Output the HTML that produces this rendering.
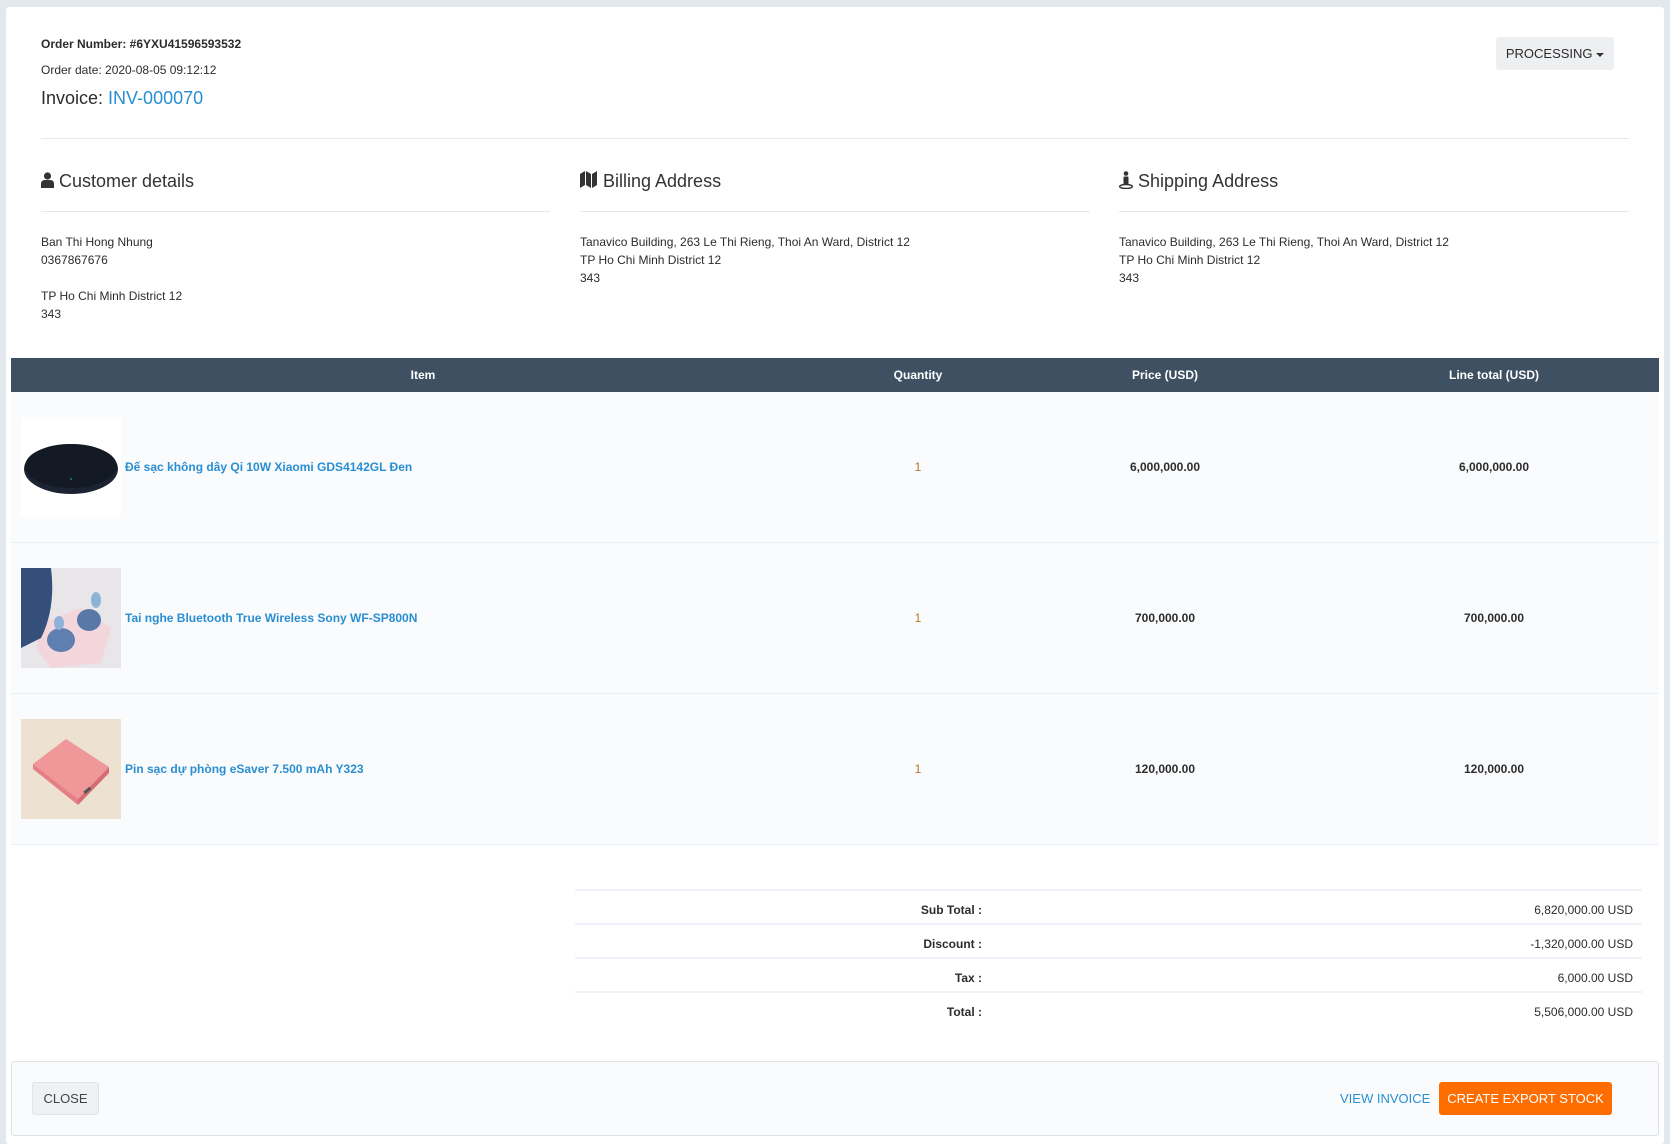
<!DOCTYPE html>
<html><head><meta charset="utf-8"><style>
*{margin:0;padding:0;box-sizing:border-box}
body{width:1670px;height:1144px;background:#e3e7ee;font-family:"Liberation Sans","Noto Sans CJK SC",sans-serif;color:#2c2c2c;position:relative;overflow:hidden;font-size:13px}
.card{position:absolute;left:6px;top:7px;width:1658px;height:1137px;background:#fff;border-radius:3px}
.a{position:absolute;white-space:nowrap}
.hr{position:absolute;height:1px;background:#e6e9ec}
.h{font-size:18px;color:#333}
.th{position:absolute;left:11px;top:358px;width:1648px;height:34px;background:#3f5062;color:#fff;font-weight:bold;font-size:12px}
.th span{position:absolute;top:10px;transform:translateX(-50%)}
.row{position:absolute;left:11px;width:1648px;height:151px;background:#f9fbfd;border-bottom:1px solid #e8eff6}
.row .img{position:absolute;left:10px;top:25px;width:100px;height:100px}
.row .nm{position:absolute;left:114px;top:68px;color:#2a8ed2;font-weight:bold;font-size:12px;white-space:nowrap}
.row .c{position:absolute;top:68px;transform:translateX(-50%);font-weight:bold;font-size:12px}
.tl{position:absolute;left:575px;width:1067px;height:2px;background:#eef3fa}
.lab{position:absolute;right:688px;font-weight:bold;font-size:12px}
.val{position:absolute;right:37px;font-size:12px}
</style></head><body>
<div class="card"></div>
<div class="a" style="left:41px;top:37px;font-weight:bold;font-size:12px">Order Number: #6YXU41596593532</div>
<div class="a" style="left:41px;top:63px;font-size:12px">Order date: 2020-08-05 09:12:12</div>
<div class="a" style="left:41px;top:88px;font-size:18px">Invoice: <span style="color:#2a8ed2">INV-000070</span></div>
<div class="a" style="left:1496px;top:37px;width:118px;height:33px;background:#eeeff1;border-radius:3px;font-size:13px;text-align:center;line-height:33px">PROCESSING <span style="display:inline-block;border-left:4px solid transparent;border-right:4px solid transparent;border-top:4px solid #333;vertical-align:middle"></span></div>
<div class="hr" style="left:41px;top:138px;width:1588px"></div>

<div class="a h" style="left:41px;top:171px"><svg width="13" height="16" viewBox="0 0 13 16" style="vertical-align:-1px"><circle cx="6.5" cy="4" r="3.6" fill="#333"/><path d="M0 16 V12 Q0 8 4 8 H9 Q13 8 13 12 V16Z" fill="#333"/></svg> Customer details</div>
<div class="a h" style="left:580px;top:171px"><svg width="18" height="17" viewBox="0 0 18 17" style="vertical-align:-1px"><path d="M0 3 L5 0 V14 L0 17Z M6 0 L11 3 V17 L6 14Z M12 3 L17 0 V14 L12 17Z" fill="#333"/></svg> Billing Address</div>
<div class="a h" style="left:1119px;top:171px"><svg width="14" height="18" viewBox="0 0 14 18" style="vertical-align:-2px"><circle cx="7" cy="2.5" r="2.3" fill="#333"/><rect x="4.5" y="5.5" width="5" height="8" rx="1" fill="#333"/><ellipse cx="7" cy="15.5" rx="6.3" ry="2" fill="none" stroke="#333" stroke-width="1.5"/></svg> Shipping Address</div>
<div class="hr" style="left:41px;top:211px;width:509px"></div>
<div class="hr" style="left:580px;top:211px;width:510px"></div>
<div class="hr" style="left:1119px;top:211px;width:510px"></div>

<div class="a" style="left:41px;top:233px;line-height:18px;font-size:12px">Ban Thi Hong Nhung<br>0367867676<br><br>TP Ho Chi Minh District 12<br>343</div>
<div class="a" style="left:580px;top:233px;line-height:18px;font-size:12px">Tanavico Building, 263 Le Thi Rieng, Thoi An Ward, District 12<br>TP Ho Chi Minh District 12<br>343</div>
<div class="a" style="left:1119px;top:233px;line-height:18px;font-size:12px">Tanavico Building, 263 Le Thi Rieng, Thoi An Ward, District 12<br>TP Ho Chi Minh District 12<br>343</div>

<div class="th"><span style="left:412px">Item</span><span style="left:907px">Quantity</span><span style="left:1154px">Price (USD)</span><span style="left:1483px">Line total (USD)</span></div>

<div class="row" style="top:392px">
<svg class="img" viewBox="0 0 100 100"><rect width="100" height="100" fill="#fff"/><ellipse cx="50" cy="52" rx="47" ry="25" fill="#1c2433"/><ellipse cx="50" cy="49" rx="46" ry="22" fill="#141a24"/><circle cx="50" cy="62" r="0.8" fill="#3c9"/></svg>
<div class="nm">Đế sạc không dây Qi 10W Xiaomi GDS4142GL Đen</div>
<div class="c" style="left:907px;color:#b5742c;font-weight:normal">1</div><div class="c" style="left:1154px">6,000,000.00</div><div class="c" style="left:1483px">6,000,000.00</div></div>

<div class="row" style="top:543px">
<svg class="img" viewBox="0 0 100 100"><rect width="100" height="100" fill="#e9e6ea"/><path d="M20 55 L60 40 L90 60 L80 95 L30 100 L15 80Z" fill="#f2d6dc"/><path d="M0 0 H30 Q35 40 20 70 L0 80Z" fill="#34507a"/><ellipse cx="40" cy="72" rx="14" ry="12" fill="#5e7fb0"/><ellipse cx="68" cy="52" rx="12" ry="11" fill="#5878a8"/><ellipse cx="75" cy="32" rx="5" ry="8" fill="#8fb3d8"/><ellipse cx="38" cy="55" rx="5" ry="7" fill="#8fb3d8"/></svg>
<div class="nm">Tai nghe Bluetooth True Wireless Sony WF-SP800N</div>
<div class="c" style="left:907px;color:#b5742c;font-weight:normal">1</div><div class="c" style="left:1154px">700,000.00</div><div class="c" style="left:1483px">700,000.00</div></div>

<div class="row" style="top:694px">
<svg class="img" viewBox="0 0 100 100"><rect width="100" height="100" fill="#ede2d2"/><path d="M12 45 L45 20 L88 48 L57 80Z" fill="#f0979a"/><path d="M12 45 L57 80 L57 86 L12 50Z" fill="#e57f85"/><path d="M57 80 L88 48 L88 54 L57 86Z" fill="#d66d74"/><rect x="62" y="70" width="8" height="3" fill="#555" transform="rotate(-40 66 71)"/></svg>
<div class="nm">Pin sạc dự phòng eSaver 7.500 mAh Y323</div>
<div class="c" style="left:907px;color:#b5742c;font-weight:normal">1</div><div class="c" style="left:1154px">120,000.00</div><div class="c" style="left:1483px">120,000.00</div></div>

<div class="tl" style="top:889px"></div>
<div class="tl" style="top:923px"></div>
<div class="tl" style="top:957px"></div>
<div class="tl" style="top:991px"></div>
<div class="lab" style="top:903px">Sub Total :</div><div class="val" style="top:903px">6,820,000.00 USD</div>
<div class="lab" style="top:937px">Discount :</div><div class="val" style="top:937px">-1,320,000.00 USD</div>
<div class="lab" style="top:971px">Tax :</div><div class="val" style="top:971px">6,000.00 USD</div>
<div class="lab" style="top:1005px">Total :</div><div class="val" style="top:1005px">5,506,000.00 USD</div>

<div class="a" style="left:11px;top:1061px;width:1648px;height:75px;background:#f9fbfd;border:1px solid #dde2e9;border-radius:3px"></div>
<div class="a" style="left:32px;top:1082px;width:67px;height:33px;background:#eff2f5;border:1px solid #e0e4e8;border-radius:3px;text-align:center;line-height:31px;font-size:13px;color:#444">CLOSE</div>
<div class="a" style="left:1340px;top:1091px;color:#2a8ed2;font-size:13px">VIEW INVOICE</div>
<div class="a" style="left:1439px;top:1082px;width:173px;height:33px;background:#ff6d00;border-radius:3px;color:#fff;text-align:center;line-height:33px;font-size:13px">CREATE EXPORT STOCK</div>
</body></html>
